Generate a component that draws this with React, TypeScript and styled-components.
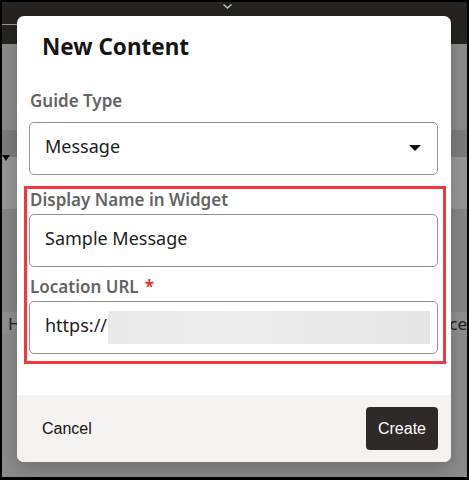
import React from "react";
import styled, { createGlobalStyle } from "styled-components";

const Global = createGlobalStyle`
  html, body { margin: 0; padding: 0; background: #000; }
  * { box-sizing: border-box; }
`;

const Frame = styled.div`
  position: relative;
  width: 469px;
  height: 480px;
  border: 2px solid #000;
  border-bottom-width: 3px;
  display: flex;
  flex-direction: column;
  overflow: hidden;
  background: #8b8b8b;
`;

const TopBar = styled.div`
  height: 42px;
  background: #252420;
  display: flex;
  flex-direction: column;
  flex-shrink: 0;
`;

const ChevronWrap = styled.div`
  display: flex;
  padding-left: 220px;
  padding-top: 1px;
  height: 9px;
`;

const TabLine = styled.div`
  margin-top: 13px;
  width: 120px;
  height: 1px;
  background: #9a9a9a;
`;

const Band = styled.div<{ $h: number; $bg: string; $align?: string }>`
  height: ${(p) => p.$h}px;
  background: ${(p) => p.$bg};
  display: flex;
  align-items: ${(p) => p.$align || "center"};
  justify-content: space-between;
  flex-shrink: 0;
`;

const BandFill = styled.div`
  flex: 1;
  background: #8b8b8b;
  display: flex;
  flex-direction: column;
`;

const Caret = styled.div`
  width: 0;
  height: 0;
  border-left: 4px solid transparent;
  border-right: 4px solid transparent;
  border-top: 6px solid #111;
  margin-top: -2px;
`;

const BgText = styled.span`
  font-family: "Noto Sans", sans-serif;
  font-size: 17px;
  color: #222;
  padding: 0 0 0 6px;
`;

const BgTextRight = styled.span`
  font-family: "Noto Sans", sans-serif;
  font-size: 17px;
  color: #222;
  padding-right: 0;
`;

const Modal = styled.div`
  position: absolute;
  left: 15px;
  top: 14px;
  width: 434px;
  height: 446px;
  background: #fff;
  border-radius: 7px;
  overflow: hidden;
  display: flex;
  flex-direction: column;
  box-shadow: 0 6px 18px rgba(0, 0, 0, 0.22);
`;

const Body = styled.div`
  flex: 1;
  padding: 17px 13px 0 12px;
  display: flex;
  flex-direction: column;
`;

const Title = styled.h2`
  margin: 0 0 0 13px;
  font-family: "Noto Sans", sans-serif;
  font-weight: 700;
  font-size: 22.5px;
  line-height: 28px;
  color: #161513;
`;

const Label = styled.div<{ $top: number; $bottom: number }>`
  margin-top: ${(p) => p.$top}px;
  margin-bottom: ${(p) => p.$bottom}px;
  padding-left: 1px;
  font-family: "Noto Sans", sans-serif;
  font-weight: 600;
  font-size: 17px;
  line-height: 22px;
  color: #646464;
`;

const Required = styled.span`
  color: #e8262b;
  margin-left: 6px;
`;

const Field = styled.div`
  height: 53px;
  border: 1px solid #949494;
  border-radius: 5px;
  display: flex;
  align-items: center;
  padding: 0 16px 5px 15px;
  font-family: "Noto Sans", sans-serif;
  font-size: 18px;
  color: #1d1d1d;
`;

const FieldText = styled.span`
  flex: 1;
`;

const DownCaret = styled.span`
  width: 0;
  height: 0;
  border-left: 6.5px solid transparent;
  border-right: 6.5px solid transparent;
  border-top: 6px solid #161513;
  margin-top: 4px;
`;

const Redacted = styled.span`
  flex: 1;
  height: 33px;
  margin-top: 4px;
  margin-right: -9px;
  margin-left: 1px;
  background: linear-gradient(90deg, #e9e9e9, #ececec 40%, #e5e5e5);
`;

const Highlight = styled.div`
  position: relative;
  margin-top: 14px;
  display: flex;
  flex-direction: column;
  &::after {
    content: "";
    position: absolute;
    top: -3px;
    left: -5px;
    right: -8px;
    bottom: -10px;
    border: 3px solid #f2373e;
    pointer-events: none;
  }
`;

const Footer = styled.div`
  height: 67px;
  background: #f4f3f1;
  display: flex;
  align-items: center;
  justify-content: space-between;
  padding: 0 13px 0 25px;
`;

const TextButton = styled.button`
  border: none;
  background: none;
  padding: 0;
  font-family: "Liberation Sans", Arial, sans-serif;
  font-size: 16px;
  color: #161513;
`;

const PrimaryButton = styled.button`
  border: none;
  height: 43px;
  padding: 0 12px;
  border-radius: 4px;
  background: #2e2a27;
  color: #fff;
  font-family: "Liberation Sans", Arial, sans-serif;
  font-size: 16px;
`;

export default function App() {
  return (
    <>
      <Global />
      <Frame>
        <TopBar>
          <ChevronWrap>
            <svg width="11" height="7" viewBox="0 0 11 7">
              <polyline points="1.5,1.5 5.5,5 9.5,1.5" fill="none" stroke="#b9bcc4" strokeWidth="1.6" />
            </svg>
          </ChevronWrap>
          <TabLine />
        </TopBar>
        <Band $h={86} $bg="#8b8b8b" />
        <Band $h={27} $bg="#7c7c7c" />
        <Band $h={52} $bg="#979797" $align="flex-start">
          <Caret />
        </Band>
        <Band $h={103} $bg="#858585" />
        <BandFill>
          <Band $h={22} $bg="#8f8f8f">
            <BgText>Hi</BgText>
            <BgTextRight>ce</BgTextRight>
          </Band>
        </BandFill>
        <Modal>
          <Body>
            <Title>New Content</Title>
            <Label $top={29} $bottom={10}>Guide Type</Label>
            <Field>
              <FieldText>Message</FieldText>
              <DownCaret />
            </Field>
            <Highlight>
              <Label $top={0} $bottom={3}>Display Name in Widget</Label>
              <Field>
                <FieldText>Sample Message</FieldText>
              </Field>
              <Label $top={9} $bottom={3}>
                Location URL<Required>*</Required>
              </Label>
              <Field>
                <span>https://</span>
                <Redacted />
              </Field>
            </Highlight>
          </Body>
          <Footer>
            <TextButton>Cancel</TextButton>
            <PrimaryButton>Create</PrimaryButton>
          </Footer>
        </Modal>
      </Frame>
    </>
  );
}
